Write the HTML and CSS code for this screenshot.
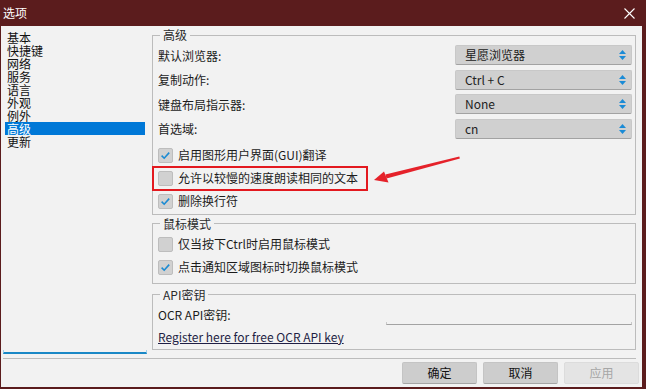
FILE: index.html
```html
<!DOCTYPE html>
<html lang="zh">
<head>
<meta charset="utf-8">
<title>选项</title>
<link rel="stylesheet" href="styles.css">
</head>
<body>
<div class="titlebar">
  <span class="title">选项</span>
  <svg class="close" width="11" height="11" viewBox="0 0 11 11"><path d="M0.5 0.5 L10.5 10.5 M10.5 0.5 L0.5 10.5" stroke="#fff" stroke-width="1.1" fill="none"/></svg>
</div>
<div class="client">
  <div class="main">
    <div class="sidebar">
      <ul class="nav">
        <li>基本</li>
        <li>快捷键</li>
        <li>网络</li>
        <li>服务</li>
        <li>语言</li>
        <li>外观</li>
        <li>例外</li>
        <li class="active">高级</li>
        <li>更新</li>
      </ul>
      <div class="nav-edge"></div>
    </div>
    <div class="panel">
      <fieldset class="group g1">
        <legend>高级</legend>
        <div class="form-row"><span class="label">默认浏览器:</span><div class="select"><span>星愿浏览器</span><svg width="7" height="10" viewBox="0 0 7 10"><path d="M3.5 0 L7 4 L0 4 Z M0 6 L7 6 L3.5 10 Z" fill="#1a8bd6"/></svg></div></div>
        <div class="form-row"><span class="label">复制动作:</span><div class="select"><span>Ctrl + C</span><svg width="7" height="10" viewBox="0 0 7 10"><path d="M3.5 0 L7 4 L0 4 Z M0 6 L7 6 L3.5 10 Z" fill="#1a8bd6"/></svg></div></div>
        <div class="form-row"><span class="label">键盘布局指示器:</span><div class="select"><span>None</span><svg width="7" height="10" viewBox="0 0 7 10"><path d="M3.5 0 L7 4 L0 4 Z M0 6 L7 6 L3.5 10 Z" fill="#1a8bd6"/></svg></div></div>
        <div class="form-row"><span class="label">首选域:</span><div class="select"><span>cn</span><svg width="7" height="10" viewBox="0 0 7 10"><path d="M3.5 0 L7 4 L0 4 Z M0 6 L7 6 L3.5 10 Z" fill="#1a8bd6"/></svg></div></div>
        <div class="check-row"><span class="box"><svg width="13" height="13" viewBox="0 0 13 13"><path d="M2.6 6.6 L5.2 9.2 L10.2 3.6" stroke="#1b8bd3" stroke-width="1.6" fill="none"/></svg></span><span>启用图形用户界面(GUI)翻译</span></div>
        <div class="check-row highlighted"><span class="box"></span><span>允许以较慢的速度朗读相同的文本</span></div>
        <div class="check-row"><span class="box"><svg width="13" height="13" viewBox="0 0 13 13"><path d="M2.6 6.6 L5.2 9.2 L10.2 3.6" stroke="#1b8bd3" stroke-width="1.6" fill="none"/></svg></span><span>删除换行符</span></div>
      </fieldset>
      <fieldset class="group g2">
        <legend>鼠标模式</legend>
        <div class="check-row"><span class="box"></span><span>仅当按下Ctrl时启用鼠标模式</span></div>
        <div class="check-row"><span class="box"><svg width="13" height="13" viewBox="0 0 13 13"><path d="M2.6 6.6 L5.2 9.2 L10.2 3.6" stroke="#1b8bd3" stroke-width="1.6" fill="none"/></svg></span><span>点击通知区域图标时切换鼠标模式</span></div>
      </fieldset>
      <fieldset class="group g3">
        <legend>API密钥</legend>
        <div class="api-row"><span class="label">OCR API密钥:</span><div class="input"><div class="input-edge"></div></div></div>
        <div class="link-row"><a class="link">Register here for free OCR API key</a></div>
      </fieldset>
    </div>
  </div>
  <div class="separator"></div>
  <div class="buttons">
    <button class="btn">确定</button>
    <button class="btn">取消</button>
    <button class="btn disabled">应用</button>
  </div>
  <div class="annot-box"></div>
  <svg class="annot-arrow" width="90" height="30" viewBox="0 0 90 30">
    <path d="M86.3 0.6 L86.9 2.4 L13.6 22.6 L12.4 18.6 Z" fill="#e5222a"/>
    <path d="M1 24 L11 15.5 L15.5 26.5 Z" fill="#e5222a"/>
  </svg>
</div>
</body>
</html>
```
FILE: styles.css
```css
* { box-sizing: border-box; }
html, body { margin: 0; padding: 0; }
body {
  width: 646px;
  height: 389px;
  background: #5b1c1d;
  font-family: "Noto Sans CJK SC", "Noto Sans", sans-serif;
  font-size: 12px;
  line-height: 14px;
  color: #1c1c1c;
  overflow: hidden;
}
.titlebar {
  height: 26px;
  display: flex;
  align-items: center;
  justify-content: space-between;
  padding: 0 11px 0 3px;
  color: #fff;
}
.title { font-size: 12px; }
.close { display: block; margin-top: 1px; }
.client {
  position: relative;
  margin: 0 4px 0 1px;
  height: 361px;
  background: #f2f2f2;
  display: flex;
  flex-direction: column;
}
.main {
  height: 328px;
  display: flex;
  padding-left: 2px;
}
.sidebar {
  width: 144px;
  display: flex;
  flex-direction: column;
}
.nav {
  list-style: none;
  margin: 0;
  padding: 5px 2px 0;
  flex: 1;
}
.nav li {
  height: 13px;
  line-height: 13px;
  padding-left: 2px;
  color: #111;
}
.nav li.active { background: #0078d7; color: #fff; }
.nav-edge {
  height: 4px;
  border: 1px solid #9fd0ec;
  border-top: none;
  border-bottom: 2px solid #1a88c6;
  width: 144px;
}
.panel {
  margin-left: 5px;
  width: 484px;
  padding-top: 2px;
}
.group {
  margin: 0;
  min-width: 0;
  border: 1px solid #bcbcbc;
  padding: 3px 3px 1px 5px;
}
.group legend {
  padding: 0 3px;
  margin-left: 2px;
  line-height: 14px;
  color: #2a2a2a;
}
.g2 { margin-top: 2px; padding-top: 2px; padding-bottom: 4px; }
.g3 { margin-top: 4px; padding-top: 2px; padding-bottom: 5px; }
.form-row {
  height: 20px;
  margin-bottom: 4.67px;
  display: flex;
  align-items: center;
}
.label { flex: 1; padding-top: 1px; }
.select {
  width: 177px;
  height: 20px;
  display: flex;
  align-items: center;
  justify-content: space-between;
  padding: 0 5px 0 9px;
  background: #d0d0d0;
  border: 1px solid #c8c8c8;
  border-bottom-color: #a2a2a2;
  border-radius: 2px;
  color: #222;
}
.select svg { display: block; }
.check-row {
  height: 23px;
  display: flex;
  align-items: center;
  position: relative;
}
.box {
  width: 15px;
  height: 15px;
  margin-right: 5px;
  background: #d1d1d1;
  border: 1px solid #bdbdbd;
  border-radius: 2px;
  display: flex;
  align-items: center;
  justify-content: center;
}
.box svg { display: block; }
.api-row {
  height: 21px;
  display: flex;
  align-items: center;
}
.input {
  width: 246px;
  height: 21px;
  display: flex;
  align-items: flex-end;
}
.input-edge {
  width: 100%;
  height: 3px;
  border: 1px solid #c9c9c9;
  border-top: none;
  border-bottom-color: #a3a3a3;
}
.link-row { margin-top: 5px; height: 14px; }
.link {
  color: #1f1f45;
  text-decoration: underline;
  text-underline-offset: 1px;
}
.separator {
  margin: 4px 0 0 2px;
  width: 633px;
  height: 1px;
  background: #bcbcbc;
}
.buttons {
  margin-top: 3px;
  display: flex;
  justify-content: flex-end;
  gap: 6px;
  padding-right: 3px;
}
.btn {
  width: 75px;
  height: 22px;
  font-family: inherit;
  font-size: 12px;
  line-height: 14px;
  color: #111;
  background: #cdcdcd;
  border: 1px solid #c4c4c4;
  border-bottom-color: #a5a5a5;
  border-radius: 2px;
  padding: 0;
}
.btn.disabled {
  background: #e4e4e4;
  border-color: #dcdcdc;
  color: #a6a6a6;
}
.annot-box {
  position: absolute;
  left: 151px;
  top: 140px;
  width: 216px;
  height: 25px;
  border: 2px solid #e3191f;
}
.annot-arrow {
  position: absolute;
  left: 372px;
  top: 130px;
}
```
